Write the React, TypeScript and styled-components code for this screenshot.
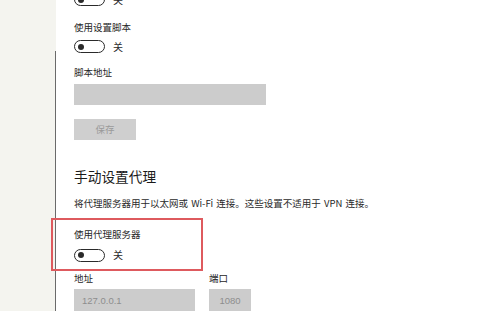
import styled, { createGlobalStyle } from "styled-components";

const GlobalStyle = createGlobalStyle`
  html, body {
    margin: 0;
    padding: 0;
    background: #ffffff;
  }
  body {
    font-family: "Noto Sans CJK SC", "Liberation Sans", sans-serif;
  }
`;

interface ToggleRowProps {
  label: string;
}

const ToggleRow = ({ label }: ToggleRowProps) => {
  return (
    <ToggleLayout>
      <Track>
        <Knob />
      </Track>
      <StateText>{label}</StateText>
    </ToggleLayout>
  );
};

const App = () => {
  return (
    <Wrapper>
      <GlobalStyle />
      <Sidebar>
        <SideSpacer />
        <SideLine />
      </Sidebar>
      <Main>
        <TopToggle>
          <ToggleRow label="关" />
        </TopToggle>
        <Label top={14}>使用设置脚本</Label>
        <ToggleBlock top={6}>
          <ToggleRow label="关" />
        </ToggleBlock>
        <Label top={12}>脚本地址</Label>
        <Input top={6} width={192} />
        <SaveButton>保存</SaveButton>
        <Heading>手动设置代理</Heading>
        <Description>
          将代理服务器用于以太网或 Wi-Fi 连接。这些设置不适用于 VPN 连接。
        </Description>
        <Highlight>
          <Label top={0}>使用代理服务器</Label>
          <ToggleBlock top={8}>
            <ToggleRow label="关" />
          </ToggleBlock>
        </Highlight>
        <FieldRow>
          <Field>
            <Label top={0}>地址</Label>
            <Input top={5} width={121}>
              127.0.0.1
            </Input>
          </Field>
          <Field>
            <Label top={0}>端口</Label>
            <Input top={5} width={42} center>
              1080
            </Input>
          </Field>
        </FieldRow>
      </Main>
    </Wrapper>
  );
};

const Wrapper = styled.div`
  width: 480px;
  height: 311px;
  display: flex;
  overflow: hidden;
  background: #ffffff;
`;

const Sidebar = styled.div`
  width: 56px;
  flex: 0 0 56px;
  display: flex;
  flex-direction: column;
  background: #f4f4ef;
`;

const SideSpacer = styled.div`
  height: 51px;
`;

const SideLine = styled.div`
  flex: 1 1 0;
  border-right: 1px solid #6a6a6a;
`;

const Main = styled.div`
  flex: 1 1 0;
  display: flex;
  flex-direction: column;
  align-items: flex-start;
  padding-left: 18px;
`;

const TopToggle = styled.div`
  margin-top: -8px;
`;

const ToggleBlock = styled.div<{ top: number }>`
  margin-top: ${(props) => props.top}px;
`;

const ToggleLayout = styled.div`
  display: flex;
  align-items: center;
  gap: 8px;
  height: 15px;
`;

const Track = styled.div`
  box-sizing: border-box;
  width: 31px;
  height: 13px;
  border: 1.5px solid #2a2a2a;
  border-radius: 7px;
  display: flex;
  align-items: center;
  padding-left: 3px;
`;

const Knob = styled.div`
  width: 6px;
  height: 6px;
  border-radius: 50%;
  background: #2a2a2a;
`;

const StateText = styled.span`
  font-size: 10px;
  line-height: 12px;
  color: #2a2a2a;
`;

const Label = styled.div<{ top: number }>`
  margin-top: ${(props) => props.top}px;
  font-size: 9.5px;
  line-height: 12px;
  color: #262626;
  white-space: nowrap;
`;

const Input = styled.div<{ top: number; width: number; center?: boolean }>`
  box-sizing: border-box;
  margin-top: ${(props) => props.top}px;
  width: ${(props) => props.width}px;
  height: 22px;
  background: #cccccc;
  display: flex;
  align-items: center;
  justify-content: ${(props) => (props.center ? "center" : "flex-start")};
  padding-left: ${(props) => (props.center ? 0 : 8)}px;
  font-family: "Liberation Sans", "Noto Sans CJK SC", sans-serif;
  font-size: 9.5px;
  color: #8e8e8e;
`;

const SaveButton = styled.div`
  margin-top: 14px;
  width: 62px;
  height: 21px;
  background: #cfcfcf;
  display: flex;
  align-items: center;
  justify-content: center;
  font-size: 9.5px;
  color: #9a9a9a;
`;

const Heading = styled.div`
  margin-top: 27px;
  font-size: 13.7px;
  line-height: 18px;
  color: #1a1a1a;
  white-space: nowrap;
`;

const Description = styled.div`
  margin-top: 12px;
  font-size: 9.5px;
  line-height: 12px;
  color: #2a2a2a;
  white-space: nowrap;
  word-spacing: 1px;
`;

const Highlight = styled.div`
  box-sizing: border-box;
  margin-top: 9px;
  margin-left: -23px;
  width: 152px;
  height: 55px;
  border: 2px solid #de5a5e;
  padding: 8px 0 0 21px;
`;

const FieldRow = styled.div`
  display: flex;
  gap: 14px;
  margin-top: 1px;
`;

const Field = styled.div`
  display: flex;
  flex-direction: column;
  align-items: flex-start;
`;

export default App;
